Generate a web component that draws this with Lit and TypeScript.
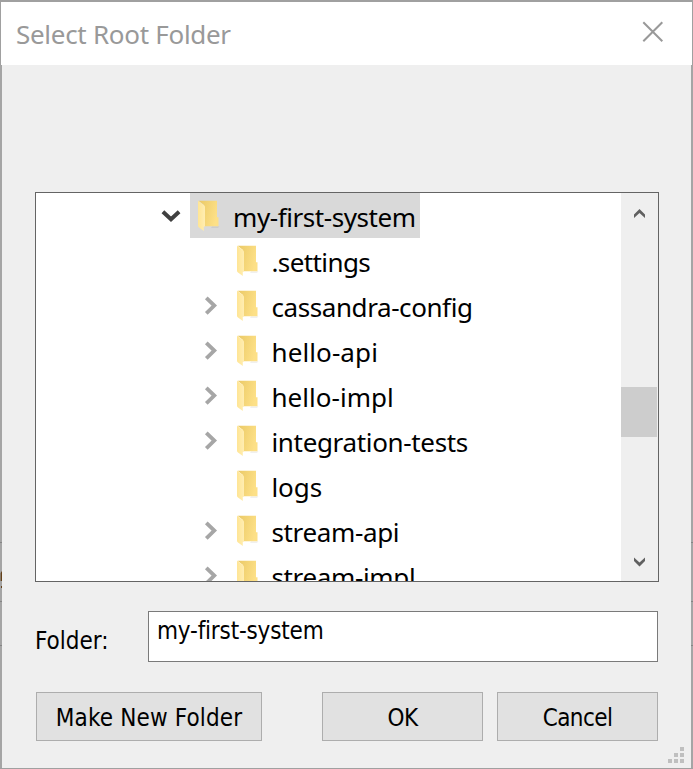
import { LitElement, html, css, svg } from "lit";
import { customElement, property } from "lit/decorators.js";
import { classMap } from "lit/directives/class-map.js";
import { styleMap } from "lit/directives/style-map.js";

interface Folder {
  name: string;
  state: "open" | "closed" | "leaf";
  tracking: number;
  root?: boolean;
}

const FOLDERS: Folder[] = [
  { name: "my-first-system", state: "open", tracking: -0.43, root: true },
  { name: ".settings", state: "leaf", tracking: -0.6 },
  { name: "cassandra-config", state: "closed", tracking: -0.42 },
  { name: "hello-api", state: "closed", tracking: 0.1 },
  { name: "hello-impl", state: "closed", tracking: 0.04 },
  { name: "integration-tests", state: "closed", tracking: -0.34 },
  { name: "logs", state: "leaf", tracking: -0.1 },
  { name: "stream-api", state: "closed", tracking: -0.36 },
  { name: "stream-impl", state: "closed", tracking: -0.36 },
];

@customElement("folder-icon")
export class FolderIcon extends LitElement {
  static styles = css`
    :host { display: block; width: 22px; height: 32px; }
    svg { display: block; }
  `;
  render() {
    return html`<svg width="22" height="32" viewBox="0 0 22 32">
      <defs>
        <linearGradient id="back" x1="0" y1="0" x2="1" y2="0.3">
          <stop offset="0.1" stop-color="#eccb68" />
          <stop offset="1" stop-color="#fde087" />
        </linearGradient>
        <linearGradient id="front" x1="0" y1="0" x2="1" y2="0">
          <stop offset="0" stop-color="#ffe594" />
          <stop offset="1" stop-color="#ffedb2" />
        </linearGradient>
      </defs>
      <path d="M14 26.5h7.5l-1.5 1.2h-7z" fill="#000" opacity=".08" />
      <path d="M0.5 0.7H19V17.3H20.5V26.2H6V5z" fill="url(#back)" />
      <path d="M0 0.7L6.4 5.4Q7 6 7 7V26.3L5.8 27V31L1 27.6Q0 26.8 0 25.8z" fill="url(#front)" />
    </svg>`;
  }
}

@customElement("folder-row")
export class FolderRow extends LitElement {
  @property({ attribute: false }) folder!: Folder;
  static styles = css`
    :host { display: block; height: 45px; flex: none; }
    .row { display: flex; height: 45px; padding-left: 165px; }
    .root { padding-left: 125px; }
    .toggle { width: 29px; height: 45px; flex: none; }
    .item {
      display: flex; height: 45px; box-sizing: border-box;
      padding: 0 5px 0 7px; gap: 12.5px;
      font: 26px/45px "Noto Sans", "Open Sans", sans-serif;
      color: #000; white-space: nowrap;
    }
    .root .item { background: #d9d9d9; gap: 13px; padding-left: 8px; padding-right: 4px; }
    .label { padding-top: 2px; height: 43px; }
    folder-icon { margin-top: 7px; flex: none; }
  `;
  render() {
    const f = this.folder;
    return html`<div class=${classMap({ row: true, root: !!f.root })}>
      <svg class="toggle" viewBox="0 0 29 45">
        ${f.state === "open"
          ? svg`<path d="M1.9 18.8L10 26.2L18.1 18.8" fill="none" stroke="#404040" stroke-width="4" />`
          : f.state === "closed"
          ? svg`<path d="M5.3 14.8L13.3 22.6L5.3 30.4" fill="none" stroke="#a6a6a6" stroke-width="3.8" />`
          : null}
      </svg>
      <div class="item">
        <folder-icon></folder-icon>
        <span class="label" style=${styleMap({ letterSpacing: `${f.tracking}px` })}>${f.name}</span>
      </div>
    </div>`;
  }
}

@customElement("app-root")
export class AppRoot extends LitElement {
  static styles = css`
    :host {
      display: block; width: 693px; height: 769px; overflow: hidden;
      font-family: "DejaVu Sans Condensed", "DejaVu Sans", sans-serif; color: #000;
    }
    .window {
      display: flex; flex-direction: column; box-sizing: border-box;
      width: 693px; height: 769px; background: #efefef;
      border-top: 2px solid #a0a0a0; border-bottom: 1px solid #a0a0a0;
    }
    .title {
      display: flex; justify-content: space-between; box-sizing: border-box;
      flex: none; height: 63px; background: #fff; padding: 0 28px 0 15px;
      border-left: 1px solid #a0a0a0; border-right: 1px solid #a0a0a0;
      font: 26px/63px "Noto Sans", "Open Sans", sans-serif;
      letter-spacing: -0.29px; color: #999;
    }
    .heading { padding-top: 1px; height: 62px; }
    .close { width: 22px; height: 22px; margin-top: 19px; }
    .body {
      display: flex; flex-direction: column; flex: 1; box-sizing: border-box; min-height: 0;
      padding: 127px 32px 0 33px; position: relative;
      border-left: 2px solid #a5a5a5; border-right: 2px solid #a5a5a5;
    }
    .tree {
      display: flex; box-sizing: border-box; flex: none;
      width: 624px; height: 390px; border: 1px solid #646464; background: #fff;
    }
    .rows { flex: 1; overflow: hidden; display: flex; flex-direction: column; }
    .scroll {
      width: 37px; display: flex; flex-direction: column; flex: none; background: #efefef;
    }
    .arrow { width: 37px; height: 42px; flex: none; }
    .before { height: 152px; flex: none; }
    .thumb { width: 36px; height: 50px; background: #cdcdcd; flex: none; }
    .after { flex: 1; }
    .field { display: flex; margin-top: 29px; height: 51px; font-size: 24px; }
    .name { width: 113px; line-height: 28px; padding-top: 16px; letter-spacing: 0; box-sizing: border-box; }
    .input {
      width: 510px; height: 51px; box-sizing: border-box; border: 1px solid #7a7a7a;
      background: #fff; padding: 5px 8px; line-height: 28px; letter-spacing: -0.18px;
    }
    .buttons { display: flex; margin: 30px 0 0 1px; height: 49px; }
    .button {
      width: 161px; height: 49px; box-sizing: border-box; border: 1px solid #adadad;
      background: #e1e1e1; text-align: center; font-size: 24px; line-height: 51px;
      letter-spacing: -0.6px; margin-left: 14px; white-space: nowrap;
    }
    .make { width: 226px; margin-left: 0; letter-spacing: 0.15px; }
    .ok { margin-left: 60px; }
    .grip { position: absolute; right: 7px; bottom: 5px; width: 16px; height: 16px; }
    .edge { position: absolute; left: -2px; top: 476px; width: 2px; height: 110px; }
    .edge.right { left: auto; right: -2px; }
  `;
  render() {
    return html`<div class="window">
      <div class="title">
        <span class="heading">Select Root Folder</span>
        <svg class="close" viewBox="0 0 22 22">
          <path d="M1.3 1.3L20.3 20.3M20.3 1.3L1.3 20.3" stroke="#999" stroke-width="2" fill="none" />
        </svg>
      </div>
      <div class="body">
        <div class="tree">
          <div class="rows">${FOLDERS.map((f) => html`<folder-row .folder=${f}></folder-row>`)}</div>
          <div class="scroll">
            <svg class="arrow" viewBox="0 0 37 42">
              <path d="M13 25V21.5L18.5 16L24 21.5V25L18.5 20z" fill="#606060" />
            </svg>
            <div class="before"></div>
            <div class="thumb"></div>
            <div class="after"></div>
            <svg class="arrow" viewBox="0 0 37 42">
              <path d="M13 18.5V22L18.5 27.5L24 22V18.5L18.5 23.5z" fill="#606060" />
            </svg>
          </div>
        </div>
        <div class="field">
          <span class="name">Folder:</span>
          <div class="input">my-first-system</div>
        </div>
        <div class="buttons">
          <div class="button make">Make New Folder</div>
          <div class="button ok">OK</div>
          <div class="button">Cancel</div>
        </div>
        <svg class="grip" viewBox="0 0 16 16" fill="#bfbfbf">
          <path d="M12 0h4v4h-4zM6 6h4v4H6zM12 6h4v4h-4zM0 12h4v4H0zM6 12h4v4H6zM12 12h4v4h-4z" />
        </svg>
        <svg class="edge" viewBox="0 0 2 110">
          <path d="M0 1h2v1H0zM0 60h2v1H0zM0 104h2v1H0z" fill="#858585" />
          <path d="M0.6 32L2 30V40H0.6zM1 45h1v2H1z" fill="#634019" />
        </svg>
        <svg class="edge right" viewBox="0 0 2 110">
          <path d="M0 1h2v1H0zM0 60h2v1H0zM0 104h2v1H0z" fill="#858585" />
        </svg>
      </div>
    </div>`;
  }
}
